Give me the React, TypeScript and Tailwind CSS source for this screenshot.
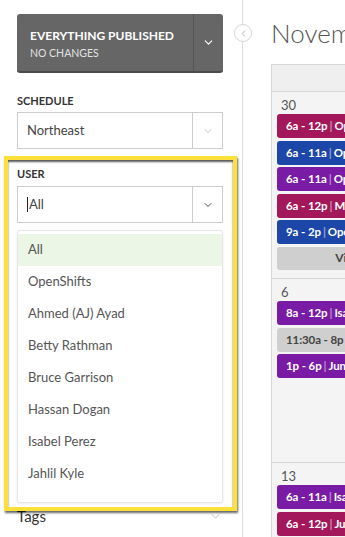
import { ChevronDown, ChevronLeft } from 'lucide-react';

interface Shift {
  time: string;
  label: string;
  color: string;
}

const users = [
  'All',
  'OpenShifts',
  'Ahmed (AJ) Ayad',
  'Betty Rathman',
  'Bruce Garrison',
  'Hassan Dogan',
  'Isabel Perez',
  'Jahlil Kyle',
];

const week1: Shift[] = [
  { time: '6a - 12p', label: 'OpenShift', color: 'bg-[#a3185b]' },
  { time: '6a - 11a', label: 'OpenShift', color: 'bg-[#1c46a8]' },
  { time: '6a - 11a', label: 'OpenShift', color: 'bg-[#7a1ba6]' },
  { time: '6a - 12p', label: 'Maria Lopez', color: 'bg-[#a3185b]' },
  { time: '9a - 2p', label: 'OpenShift', color: 'bg-[#1c46a8]' },
];

const week2: Shift[] = [
  { time: '8a - 12p', label: 'Isabel Perez', color: 'bg-[#7a1ba6]' },
  { time: '11:30a - 8p', label: 'Betty Rathman', color: 'bg-[#cfcfcf]' },
  { time: '1p - 6p', label: 'June Park', color: 'bg-[#7a1ba6]' },
];

const week3: Shift[] = [
  { time: '6a - 11a', label: 'Isabel Perez', color: 'bg-[#7a1ba6]' },
  { time: '6a - 12p', label: 'June Park', color: 'bg-[#a3185b]' },
];

const ShiftPill = ({ shift }: { shift: Shift }) => {
  const grey = shift.color === 'bg-[#cfcfcf]';
  return (
    <div
      className={`flex h-[24px] items-center whitespace-nowrap rounded-[3px] px-[9px] text-[11.5px] font-bold tracking-[-0.1px] ${shift.color} ${
        grey ? 'text-[#444]' : 'text-white'
      }`}
    >
      {shift.time}
      <span className="mx-[2px] opacity-50">|</span>
      {shift.label}
    </div>
  );
};

const DayCell = ({ day, shifts, more }: { day: string; shifts: Shift[]; more?: boolean }) => (
  <div className="w-[194px] px-[5px] pt-[5px]">
    <div className="pl-[4px] text-[13px] leading-[16px] text-[#555]">{day}</div>
    <div className="mt-[1px] flex flex-col gap-[2.5px]">
      {shifts.map((s, i) => (
        <ShiftPill key={i} shift={s} />
      ))}
      {more && (
        <div className="flex h-[23px] items-center justify-center rounded-[3px] bg-[#cfcfcf] text-[12px] font-bold text-[#444]">
          View 2 more
        </div>
      )}
    </div>
  </div>
);

const App = () => {
  return (
    <div className="flex h-[537px] w-[345px] overflow-hidden bg-white font-['Lato',sans-serif]">
      <aside className="relative w-[243px] shrink-0 border-r border-[#dedede] pl-[17px] pr-[19px] pt-[14px]">
        <button className="absolute right-[-10px] top-[24px] z-20 flex h-[18px] w-[18px] items-center justify-center rounded-full border border-[#d6d6d6] bg-white text-[#999]">
          <ChevronLeft size={11} strokeWidth={1.5} />
        </button>

        <div className="flex h-[59px] rounded-[3px] border-b-2 border-[#4a4a4a] bg-[#666666]">
          <div className="flex-1 pl-[13px] pt-[14px]">
            <div className="text-[12px] font-bold leading-[16px] text-white">EVERYTHING PUBLISHED</div>
            <div className="mt-[2px] text-[10.5px] leading-[14px] text-[#e2e2e2]">NO CHANGES</div>
          </div>
          <div className="flex w-[30px] items-center justify-center border-l border-[#555]">
            <ChevronDown size={13} strokeWidth={2} className="text-white" />
          </div>
        </div>

        <div className="mt-[21px] text-[11px] font-bold leading-[14px] text-[#333]">SCHEDULE</div>
        <div className="mt-[4px] flex h-[37px] border border-[#cccccc] bg-white">
          <div className="flex flex-1 items-center pl-[9px] text-[13px] text-[#444]">Northeast</div>
          <div className="flex w-[30px] items-center justify-center border-l border-[#cccccc]">
            <ChevronDown size={12} strokeWidth={1.2} className="text-[#999]" />
          </div>
        </div>

        <div className="relative z-10 -ml-[13px] -mr-[14px] mt-[7px] border-4 border-[#fde13a] bg-white pb-[4px] pl-[9px] pr-[10px] pt-[7px] shadow-[1px_2px_2px_rgba(0,0,0,0.6),inset_0_2px_2px_rgba(0,0,0,0.65)]">
          <div className="text-[11px] font-bold leading-[14px] text-[#333]">USER</div>
          <div className="mt-[5px] flex h-[37px] border border-[#cccccc] bg-white">
            <div className="flex flex-1 items-center pl-[9px] text-[13px] text-[#444]">
              <span className="mr-[1px] h-[15px] w-px bg-[#222]" />
              All
            </div>
            <div className="flex w-[30px] items-center justify-center border-l border-[#cccccc]">
              <ChevronDown size={12} strokeWidth={1.8} className="text-[#333]" />
            </div>
          </div>
          <ul className="mt-[7px] rounded-[3px] border border-[#e6e6e6] bg-white pb-[12px] pt-[3px] shadow-[0_1px_3px_rgba(0,0,0,0.08)]">
            {users.map((u, i) => (
              <li
                key={u}
                className={`flex h-[32px] items-center pl-[10px] text-[13px] text-[#555] ${
                  i === 0 ? 'bg-[#ebf6e6]' : ''
                }`}
              >
                {u}
              </li>
            ))}
          </ul>
        </div>

        <div className="-mt-[5px] flex items-center justify-between">
          <span className="text-[15px] leading-[20px] text-[#333]">Tags</span>
          <ChevronDown size={13} strokeWidth={1.2} className="mr-[1px] text-[#999]" />
        </div>
      </aside>

      <main className="min-w-0 flex-1 overflow-hidden pl-[28px]">
        <h1 className="mt-[18px] whitespace-nowrap text-[26px] font-light leading-[30px] text-[#555]">November 2024</h1>
        <div className="mt-[16px] w-[700px] border border-[#d6d6d6] bg-[#f4f4f4]">
          <div className="h-[27px] border-b border-[#d6d6d6] bg-[#efefef]" />
          <div className="h-[187px] border-b border-[#d6d6d6]">
            <DayCell day="30" shifts={week1} more />
          </div>
          <div className="h-[184px] border-b border-[#d6d6d6]">
            <DayCell day="6" shifts={week2} />
          </div>
          <div className="h-[120px]">
            <DayCell day="13" shifts={week3} />
          </div>
        </div>
      </main>
    </div>
  );
};

export default App;
